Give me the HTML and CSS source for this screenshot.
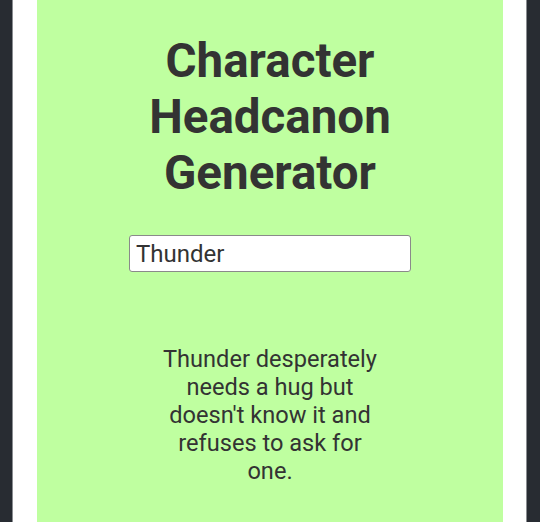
FILE: index.html
```html
<!DOCTYPE html>
<html lang="en">
<head>
    <meta charset="UTF-8">
    <meta name="viewport" content="width=device-width, initial-scale=1.0">
    <title>Character Headcanon Generator</title>
    <link rel="stylesheet" href="styles.css">
</head>
<body>
    <div class="frame">
        <div class="panel">
            <h1>Character Headcanon Generator</h1>

            <input type="text" id="charName" class="name-input" value="Thunder">

            <p class="headcanon" id="headcanon">
                Thunder desperately needs a hug but doesn't know it and refuses to ask for one.
            </p>
        </div>
    </div>
</body>
</html>
```

FILE: styles.css
```css
html, body {
    height: 100%;
}
body {
    margin: 0;
    padding: 0 13px 0 12px;
    background-color: #282c32;
    font-family: Roboto, "Liberation Sans", Arial, sans-serif;
    color: #333;
    overflow: hidden;
}
.frame {
    background-color: white;
    border-left: 1px solid #8a8d91;
    border-right: 1px solid #8a8d91;
    padding: 0 23px 0 24px;
    height: 100%;
}
.panel {
    background-color: #bfffa0;
    height: 100%;
    padding-top: 32.5px;
    display: flex;
    flex-direction: column;
    align-items: center;
    text-align: center;
    box-sizing: border-box;
}
h1 {
    margin: 0;
    font-size: 47.5px;
    line-height: 56px;
    font-weight: bold;
    width: 300px;
}
.name-input {
    margin-top: 34.5px;
    width: 282px;
    box-sizing: border-box;
    font-family: inherit;
    font-size: 24px;
    color: #333;
    padding: 3.5px 6px;
    border: 1px solid #8a8a8a;
    border-radius: 3px;
    background-color: white;
}
.headcanon {
    margin: 72.5px 0 0;
    width: 225px;
    font-size: 23.6px;
    line-height: 28px;
}
```
